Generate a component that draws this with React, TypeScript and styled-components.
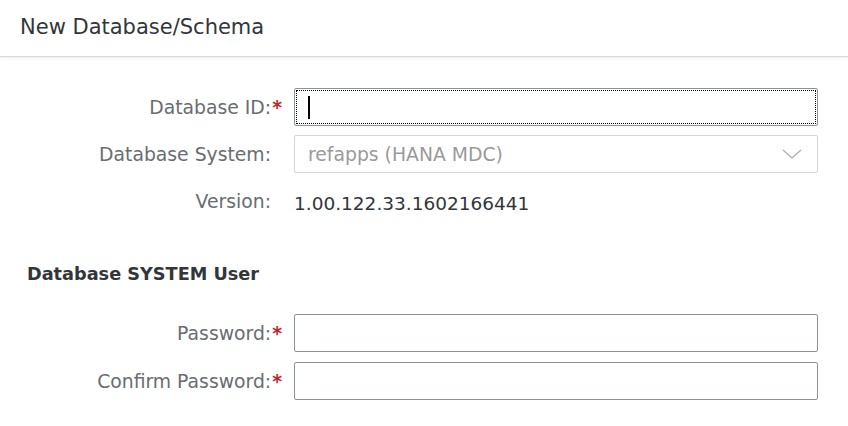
import React from "react";
import styled, { createGlobalStyle } from "styled-components";

const Global = createGlobalStyle`
  html, body { margin: 0; padding: 0; background: #fff; }
  body { font-family: "DejaVu Sans", "Liberation Sans", sans-serif; }
  * { box-sizing: border-box; }
`;

const Page = styled.div`
  width: 848px;
  height: 426px;
  background: #fff;
  overflow: hidden;
`;

const Header = styled.header`
  height: 57px;
  display: flex;
  align-items: center;
  padding: 0 20px 2px;
  border-bottom: 1px solid #d9d9d9;
  box-shadow: 0 1px 2px rgba(0, 0, 0, 0.08);
`;

const Title = styled.h1`
  margin: 0;
  font-size: 21px;
  font-weight: 400;
  color: #32363a;
`;

const Form = styled.div`
  padding: 31px 30px 0 0;
  display: flex;
  flex-direction: column;
`;

const Row = styled.div<{ $gap?: number }>`
  display: grid;
  grid-template-columns: 282px 1fr;
  column-gap: 12px;
  align-items: center;
  height: 38px;
  margin-bottom: ${(p) => p.$gap ?? 9}px;
`;

const Label = styled.label<{ $required?: boolean }>`
  justify-self: end;
  font-size: 18.8px;
  color: #6a6d70;
  padding-right: ${(p) => (p.$required ? 0 : 11)}px;
  white-space: nowrap;
`;

const Star = styled.span`
  color: #c0272d;
  font-weight: 700;
  margin-left: 1px;
`;

const Input = styled.div<{ $focused?: boolean; $disabled?: boolean }>`
  position: relative;
  height: 38px;
  border: 1px solid ${(p) => (p.$disabled ? "#d5d5d5" : "#89919a")};
  border-radius: 2px;
  background: #fff;
  display: flex;
  align-items: center;
  padding: 0 13px;
  font-size: 18.8px;
  color: ${(p) => (p.$disabled ? "#9a9a9a" : "#32363a")};
  outline: ${(p) => (p.$focused ? "1px dotted #000" : "none")};
  outline-offset: -3px;
`;

const Caret = styled.span`
  width: 2px;
  height: 23px;
  background: #000;
`;

const Chevron = styled.svg`
  position: absolute;
  right: 15px;
  top: 50%;
  transform: translateY(-50%);
`;

const Value = styled.div`
  font-size: 18.5px;
  color: #32363a;
  padding-top: 5px;
`;

const Section = styled.h2`
  margin: 0;
  padding-left: 27px;
  height: 38px;
  display: flex;
  align-items: center;
  font-size: 17.7px;
  font-weight: 700;
  color: #32363a;
  margin-bottom: 21px;
`;

export default function App() {
  return (
    <Page>
      <Global />
      <Header>
        <Title>New Database/Schema</Title>
      </Header>
      <Form>
        <Row>
          <Label $required>
            Database ID:<Star>*</Star>
          </Label>
          <Input $focused>
            <Caret />
          </Input>
        </Row>
        <Row>
          <Label>Database System:</Label>
          <Input $disabled>
            refapps (HANA MDC)
            <Chevron width="20" height="10" viewBox="0 0 20 10">
              <path d="M1 1 L10 9 L19 1" fill="none" stroke="#a9adb2" strokeWidth="1.2" />
            </Chevron>
          </Input>
        </Row>
        <Row $gap={35}>
          <Label>Version:</Label>
          <Value>1.00.122.33.1602166441</Value>
        </Row>
        <Section>Database SYSTEM User</Section>
        <Row $gap={10}>
          <Label $required>
            Password:<Star>*</Star>
          </Label>
          <Input />
        </Row>
        <Row>
          <Label $required>
            Confirm Password:<Star>*</Star>
          </Label>
          <Input />
        </Row>
      </Form>
    </Page>
  );
}
